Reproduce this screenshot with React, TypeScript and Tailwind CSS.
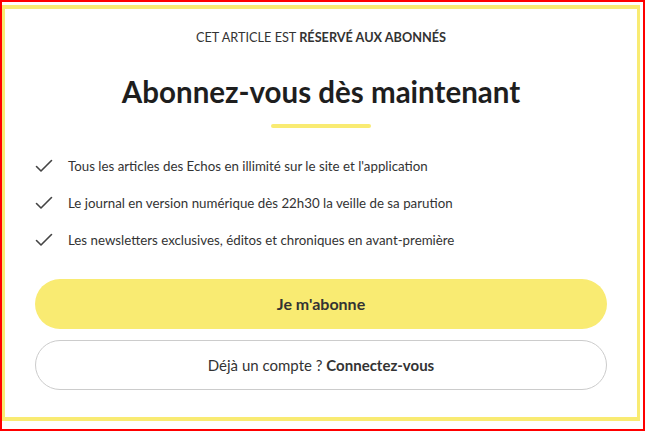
const items = [
  "Tous les articles des Echos en illimité sur le site et l'application",
  "Le journal en version numérique dès 22h30 la veille de sa parution",
  "Les newsletters exclusives, éditos et chroniques en avant-première",
]

const Check = () => (
  <svg width="18" height="14" viewBox="0 0 18 14" fill="none" className="shrink-0">
    <path d="M1.5 7.5 L6 12 L16.5 1.5" stroke="#444" strokeWidth="1.6" strokeLinecap="round" strokeLinejoin="round" />
  </svg>
)

export default function App() {
  return (
    <div className="w-[646px] h-[432px] bg-white font-['Lato',sans-serif] text-[#222]">
      <div className="w-[645px] h-[431px] border-2 border-[#ff0000] pt-[3px] pr-[3px]">
        <div className="h-[416px] border-[#f9eb72] border-y-4 border-x-[3px] px-[30px] pt-[20px] flex flex-col">
          <p className="text-center text-[12.7px] leading-[16px] text-[#333]">
            CET ARTICLE EST <span className="font-bold">RÉSERVÉ AUX ABONNÉS</span>
          </p>
          <h1 className="mt-[29px] text-center text-[29.5px] leading-[36px] font-bold text-[#1e1e1e]">
            Abonnez-vous dès maintenant
          </h1>
          <div className="mx-auto mt-[14px] h-[4px] w-[100px] rounded-full bg-[#f9eb72]" />
          <ul className="mt-[29px] flex flex-col gap-[19px]">
            {items.map((t) => (
              <li key={t} className="flex items-center gap-[15px] h-[18px]">
                <Check />
                <span className="text-[13.3px] leading-[18px] text-[#333]">{t}</span>
              </li>
            ))}
          </ul>
          <button className="mt-[30px] h-[50px] w-full rounded-full bg-[#f9eb72] text-[16px] font-bold text-[#333]">
            Je m'abonne
          </button>
          <button className="mt-[11px] h-[50px] w-full rounded-full border border-[#cccccc] bg-white text-[15px] text-[#333]">
            Déjà un compte ? <span className="font-bold">Connectez-vous</span>
          </button>
        </div>
      </div>
    </div>
  )
}
